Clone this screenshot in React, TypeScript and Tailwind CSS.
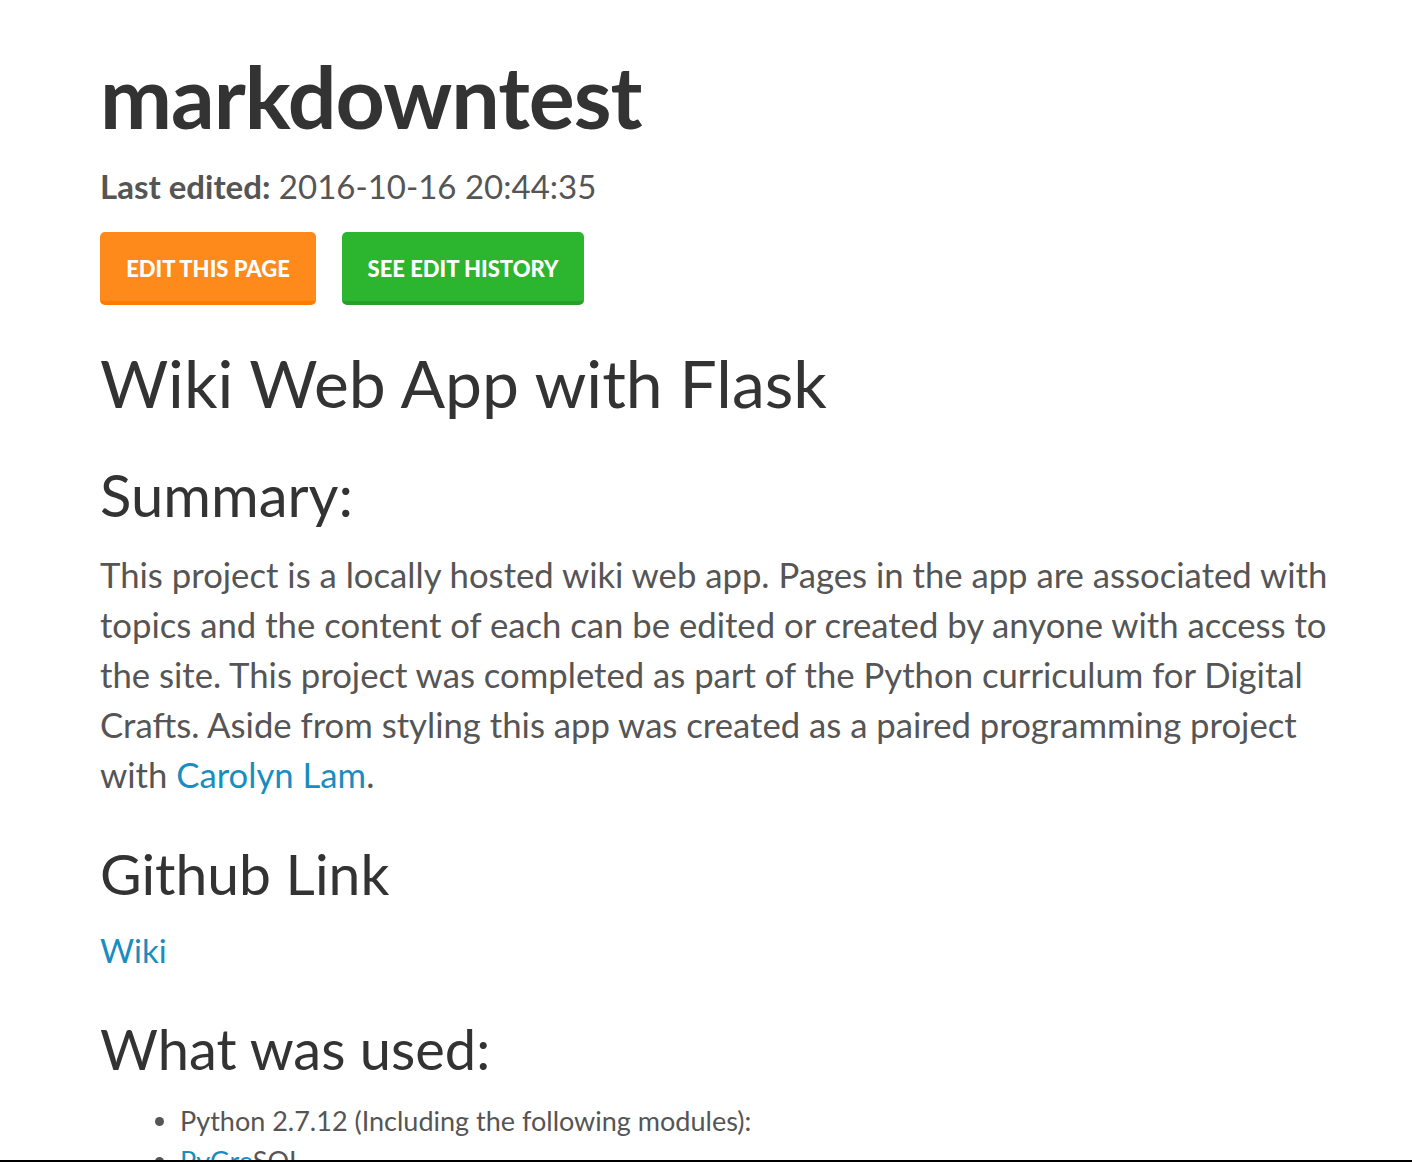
const bodyFont = { fontFamily: "Lato, 'Open Sans', sans-serif" };

export default function App() {
  return (
    <div
      className="h-[1162px] overflow-hidden border-b-2 border-black bg-white text-[#333]"
      style={bodyFont}
    >
      <main className="pl-[100px] pr-[60px] pt-[46px]">
        <h1 className="text-[86px] font-bold leading-[100px] tracking-[-1px]">markdowntest</h1>

        <p className="mt-[20px] text-[33px] leading-[40px] text-[#555]">
          <span className="font-bold">Last edited:</span> 2016-10-16 20:44:35
        </p>

        <div className="mt-[26px] flex gap-[26px]">
          <a
            href="#"
            className="flex h-[73px] w-[216px] items-center justify-center rounded-[5px] border-b-[4px] border-[#ff7b00] bg-[#ff8a1c] pt-[3px] text-[22px] font-black uppercase text-white"
          >
            Edit this page
          </a>
          <a
            href="#"
            className="flex h-[73px] w-[242px] items-center justify-center rounded-[5px] border-b-[4px] border-[#26a02a] bg-[#2cb52f] pt-[3px] text-[22px] font-black uppercase text-white"
          >
            See edit history
          </a>
        </div>

        <h2 className="mt-[38px] text-[66px] font-normal leading-[80px]">Wiki Web App with Flask</h2>

        <h3 className="mt-[37px] text-[58px] font-normal leading-[70px]">Summary:</h3>
        <p className="mt-[20px] text-[34.7px] leading-[50px] text-[#555]">
          This project is a locally hosted wiki web app. Pages in the app are associated with topics and the
          content of each can be edited or created by anyone with access to the site. This project was completed
          as part of the Python curriculum for Digital Crafts. Aside from styling this app was created as a paired
          programming project with{" "}
          <a href="#" className="text-[#1a8dc0]">
            Carolyn Lam
          </a>
          .
        </p>

        <h3 className="mt-[38px] text-[57px] font-normal leading-[70px]">Github Link</h3>
        <p className="mt-[17px] text-[33px] leading-[50px]">
          <a href="#" className="text-[#1a8dc0]">
            Wiki
          </a>
        </p>

        <h3 className="mt-[39px] text-[56px] font-normal leading-[70px]">What was used:</h3>
        <ul className="mt-[17px] list-disc pl-[80px] text-[27px] leading-[40px] text-[#555]">
          <li>Python 2.7.12 (Including the following modules):</li>
          <li>
            <a href="#" className="text-[#1a8dc0]">
              PyGre
            </a>
            SQL
          </li>
        </ul>
      </main>
    </div>
  );
}
